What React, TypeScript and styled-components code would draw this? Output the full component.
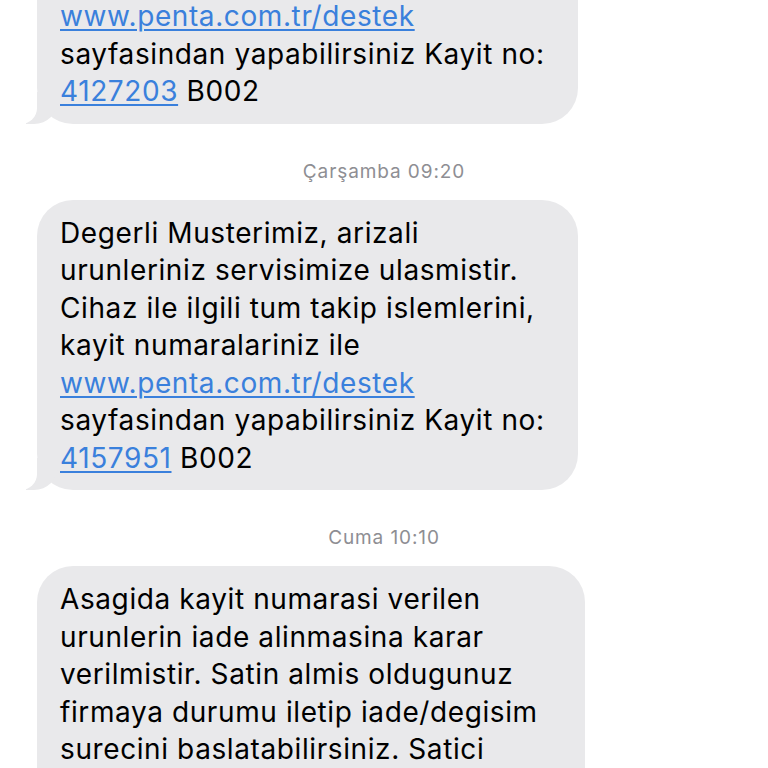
import React from 'react';
import styled, { createGlobalStyle } from 'styled-components';

const GlobalStyle = createGlobalStyle`
  html, body {
    margin: 0;
    padding: 0;
    background: #ffffff;
    overflow: hidden;
  }
  body {
    font-family: Inter, 'Noto Sans', 'Liberation Sans', sans-serif;
    -webkit-font-smoothing: antialiased;
  }
`;

type Part = string | { link: string };

interface Message {
  id: number;
  stamp?: string;
  width: number;
  lines: Part[][];
}

const messages: Message[] = [
  {
    id: 1,
    width: 541,
    lines: [
      ['Degerli Musterimiz, arizali'],
      ['urunleriniz servisimize ulasmistir.'],
      ['Cihaz ile ilgili tum takip islemlerini,'],
      ['kayit numaralariniz ile'],
      [{ link: 'www.penta.com.tr/destek' }],
      ['sayfasindan yapabilirsiniz Kayit no:'],
      [{ link: '4127203' }, ' B002'],
    ],
  },
  {
    id: 2,
    stamp: 'Çarşamba 09:20',
    width: 541,
    lines: [
      ['Degerli Musterimiz, arizali'],
      ['urunleriniz servisimize ulasmistir.'],
      ['Cihaz ile ilgili tum takip islemlerini,'],
      ['kayit numaralariniz ile'],
      [{ link: 'www.penta.com.tr/destek' }],
      ['sayfasindan yapabilirsiniz Kayit no:'],
      [{ link: '4157951' }, ' B002'],
    ],
  },
  {
    id: 3,
    stamp: 'Cuma 10:10',
    width: 548,
    lines: [
      ['Asagida kayit numarasi verilen'],
      ['urunlerin iade alinmasina karar'],
      ['verilmistir. Satin almis oldugunuz'],
      ['firmaya durumu iletip iade/degisim'],
      ['surecini baslatabilirsiniz. Satici'],
      ['firma bilgileri ve kayit numaralari'],
      ['asagidadir.'],
    ],
  },
];

const App: React.FC = () => {
  return (
    <>
      <GlobalStyle />
      <Thread>
        {messages.map((m) => (
          <React.Fragment key={m.id}>
            {m.stamp && <Stamp>{m.stamp}</Stamp>}
            <Bubble $width={m.width}>
              {m.lines.map((line, i) => (
                <Line key={i}>
                  {line.map((part, j) =>
                    typeof part === 'string' ? (
                      <React.Fragment key={j}>{part}</React.Fragment>
                    ) : (
                      <Link key={j}>{part.link}</Link>
                    )
                  )}
                </Line>
              ))}
            </Bubble>
          </React.Fragment>
        ))}
      </Thread>
    </>
  );
};

export default App;

// scrolled thread: the first bubble starts above the top edge
const Thread = styled.div`
  width: 768px;
  height: 768px;
  overflow: hidden;
  display: flex;
  flex-direction: column;
  align-items: flex-start;
  padding-left: 37px;
  box-sizing: border-box;
  > :first-child {
    margin-top: -167px;
  }
`;

const Stamp = styled.div`
  align-self: stretch;
  margin-left: -37px;
  text-align: center;
  font-size: 19px;
  line-height: 22px;
  letter-spacing: 0.9px;
  color: #8e8e93;
  padding: 37px 0 17px;
`;

const Bubble = styled.div<{ $width: number }>`
  position: relative;
  width: ${(p) => p.$width}px;
  box-sizing: border-box;
  padding: 15px 0 13px 23px;
  background: #e9e9eb;
  border-radius: 36px;
  color: #000000;
  font-size: 28px;
  line-height: 37.5px;
  letter-spacing: 0.6px;
  &::before {
    content: '';
    position: absolute;
    bottom: 0;
    left: -11px;
    width: 32px;
    height: 32px;
    background: #e9e9eb;
    border-bottom-right-radius: 24px;
  }
  &::after {
    content: '';
    position: absolute;
    bottom: 0;
    left: -16px;
    width: 16px;
    height: 32px;
    background: #ffffff;
    border-bottom-right-radius: 16px;
  }
`;

const Line = styled.div`
  position: relative;
  z-index: 1;
  white-space: nowrap;
`;

const Link = styled.span`
  color: #3a80dc;
  text-decoration: underline;
  text-decoration-thickness: 1.5px;
  text-underline-offset: 3px;
`;
